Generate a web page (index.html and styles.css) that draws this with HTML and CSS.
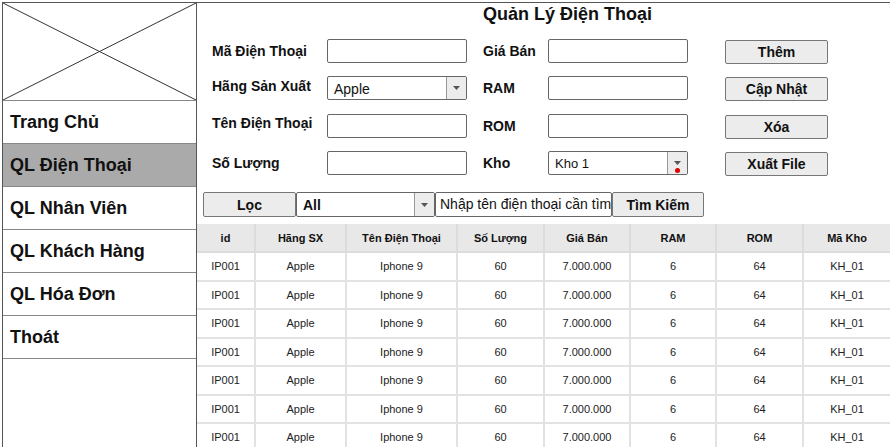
FILE: index.html
```html
<!DOCTYPE html>
<html lang="vi">
<head>
<meta charset="utf-8">
<title>Quản Lý Điện Thoại</title>
<link rel="stylesheet" href="styles.css">
</head>
<body>
<div class="frame">
  <aside class="sidebar">
    <div class="logo">
      <svg width="193" height="97" viewBox="0 0 193 97" preserveAspectRatio="none">
        <line x1="0" y1="0" x2="193" y2="97" stroke="#333" stroke-width="1"/>
        <line x1="193" y1="0" x2="0" y2="97" stroke="#333" stroke-width="1"/>
      </svg>
    </div>
    <nav class="menu">
      <div class="menu-item">Trang Chủ</div>
      <div class="menu-item active">QL Điện Thoại</div>
      <div class="menu-item">QL Nhân Viên</div>
      <div class="menu-item">QL Khách Hàng</div>
      <div class="menu-item">QL Hóa Đơn</div>
      <div class="menu-item">Thoát</div>
    </nav>
  </aside>
  <main class="main">
    <div class="form">
      <h1 class="title">Quản Lý Điện Thoại</h1>

      <label class="lbl">Mã Điện Thoại</label>
      <div class="input"></div>
      <label class="lbl">Giá Bán</label>
      <div class="input"></div>
      <button class="btn">Thêm</button>

      <label class="lbl up">Hãng Sản Xuất</label>
      <div class="select"><span class="val">Apple</span><span class="arrow"><svg width="7" height="4" viewBox="0 0 7 4"><path d="M0 0H7L3.5 4Z" fill="#555"/></svg></span></div>
      <label class="lbl">RAM</label>
      <div class="input"></div>
      <button class="btn">Cập Nhật</button>

      <label class="lbl up">Tên Điện Thoại</label>
      <div class="input"></div>
      <label class="lbl">ROM</label>
      <div class="input"></div>
      <button class="btn">Xóa</button>

      <label class="lbl">Số Lượng</label>
      <div class="input"></div>
      <label class="lbl">Kho</label>
      <div class="select small"><span class="val">Kho 1</span><span class="arrow"><svg width="7" height="4" viewBox="0 0 7 4"><path d="M0 0H7L3.5 4Z" fill="#555"/></svg><span class="dot"></span></span></div>
      <button class="btn">Xuất File</button>
    </div>

    <div class="filter">
      <button class="btn f-loc">Lọc</button>
      <div class="select f-all"><span class="val bold">All</span><span class="arrow"><svg width="7" height="4" viewBox="0 0 7 4"><path d="M0 0H7L3.5 4Z" fill="#555"/></svg></span></div>
      <div class="input f-search">Nhập tên điện thoại cần tìm</div>
      <button class="btn f-find">Tìm Kiếm</button>
    </div>

    <table class="grid">
      <colgroup>
        <col style="width:58px"><col style="width:91px"><col style="width:111px"><col style="width:87px">
        <col style="width:86px"><col style="width:86px"><col style="width:87px"><col style="width:87px">
      </colgroup>
      <thead>
        <tr><th>id</th><th>Hãng SX</th><th>Tên Điện Thoại</th><th>Số Lượng</th><th>Giá Bán</th><th>RAM</th><th>ROM</th><th>Mã Kho</th></tr>
      </thead>
      <tbody>
        <tr><td>IP001</td><td>Apple</td><td>Iphone 9</td><td>60</td><td>7.000.000</td><td>6</td><td>64</td><td>KH_01</td></tr>
        <tr><td>IP001</td><td>Apple</td><td>Iphone 9</td><td>60</td><td>7.000.000</td><td>6</td><td>64</td><td>KH_01</td></tr>
        <tr><td>IP001</td><td>Apple</td><td>Iphone 9</td><td>60</td><td>7.000.000</td><td>6</td><td>64</td><td>KH_01</td></tr>
        <tr><td>IP001</td><td>Apple</td><td>Iphone 9</td><td>60</td><td>7.000.000</td><td>6</td><td>64</td><td>KH_01</td></tr>
        <tr><td>IP001</td><td>Apple</td><td>Iphone 9</td><td>60</td><td>7.000.000</td><td>6</td><td>64</td><td>KH_01</td></tr>
        <tr><td>IP001</td><td>Apple</td><td>Iphone 9</td><td>60</td><td>7.000.000</td><td>6</td><td>64</td><td>KH_01</td></tr>
        <tr><td>IP001</td><td>Apple</td><td>Iphone 9</td><td>60</td><td>7.000.000</td><td>6</td><td>64</td><td>KH_01</td></tr>
      </tbody>
    </table>
  </main>
</div>
</body>
</html>
```

FILE: styles.css
```css
* { box-sizing: border-box; }

html, body {
  margin: 0;
  padding: 0;
  background: #fff;
  overflow: hidden;
}

body {
  font-family: "Liberation Sans", Arial, sans-serif;
  color: #111;
}

.frame {
  margin: 2px 0 0 2px;
  border-top: 1px solid #555;
  border-left: 1px solid #555;
  display: flex;
  height: 445px;
  overflow: hidden;
}

/* Sidebar */
.sidebar {
  width: 194px;
  flex: none;
  border-right: 1px solid #555;
}

.logo {
  height: 98px;
  border-bottom: 1px solid #888;
}

.logo svg { display: block; }

.menu-item {
  height: 43px;
  border-bottom: 1px solid #888;
  display: flex;
  align-items: center;
  padding-left: 7px;
  font-weight: bold;
  font-size: 18px;
}

.menu-item.active { background: #aaaaaa; }

/* Main */
.main {
  flex: 1;
  min-width: 0;
  display: flex;
  flex-direction: column;
}

.form {
  display: grid;
  grid-template-columns: 115px 156px 65px 177px 103px;
  grid-template-rows: 22px repeat(4, 24px);
  row-gap: 13.5px;
  margin-left: 15px;
  align-items: center;
}

.title {
  grid-column: 3 / span 3;
  margin: 0;
  font-size: 18px;
  font-weight: bold;
  line-height: 22px;
  align-self: start;
}

.lbl {
  font-weight: bold;
  font-size: 14px;
}

.lbl.up { margin-top: -5px; }

.input {
  width: 140px;
  height: 24px;
  border: 1px solid #666;
  border-radius: 2px;
  background: #fff;
}

.select {
  width: 140px;
  height: 24px;
  border: 1px solid #666;
  border-radius: 2px;
  background: #fff;
  display: flex;
  overflow: hidden;
}

.select .val {
  flex: 1;
  padding-left: 6px;
  font-size: 14px;
  line-height: 22px;
  margin-top: 1px;
}

.select.small .val { font-size: 13px; }

.select .bold { font-weight: bold; }

.select .arrow {
  position: relative;
  width: 20px;
  flex: none;
  background: #ececec;
  border-left: 1px solid #999;
  display: flex;
  align-items: center;
  justify-content: center;
}

.select .dot {
  position: absolute;
  left: 7px;
  bottom: 1px;
  width: 5px;
  height: 5px;
  border-radius: 50%;
  background: #e00000;
}

.btn {
  width: 103px;
  height: 24px;
  margin-top: 2px;
  border: 1px solid #777;
  border-radius: 2px;
  background: #ececec;
  font-family: "Liberation Sans", Arial, sans-serif;
  font-size: 14px;
  font-weight: bold;
  color: #111;
  padding: 0;
}

/* Filter row */
.filter {
  display: flex;
  margin: 17px 0 0 6px;
  height: 25px;
}

.filter .btn { margin-top: 0; height: 25px; }
.f-loc { width: 93px; }
.f-all { width: 139px; height: 25px; }
.f-search {
  width: 177px;
  height: 25px;
  font-size: 14px;
  line-height: 23px;
  padding-left: 4px;
  white-space: nowrap;
  overflow: hidden;
}
.f-find { width: 92px; }

/* Table */
.grid {
  margin-top: 7px;
  margin-left: 0;
  border-collapse: collapse;
  table-layout: fixed;
  width: 693px;
}

.grid th {
  height: 28px;
  background: #e8e8e8;
  font-size: 11px;
  font-weight: bold;
  border: 2px solid #dcdcdc;
  border-top: none;
  padding: 0;
}

.grid td {
  height: 28.5px;
  font-size: 11px;
  color: #222;
  text-align: center;
  border: 2px solid #e2e2e2;
  padding: 0;
}

.grid tr > :first-child { border-left: none; }
.grid tr > :last-child { border-right: none; }
```
